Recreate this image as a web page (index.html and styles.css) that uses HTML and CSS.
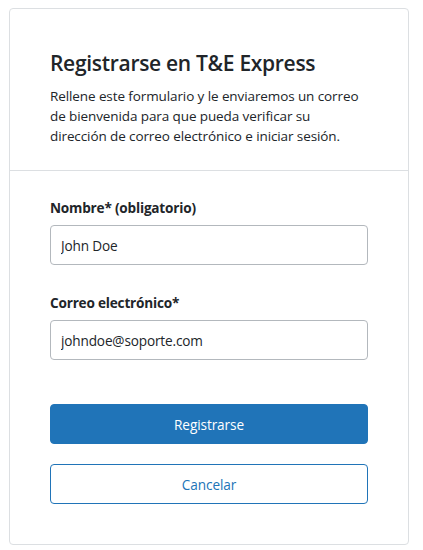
FILE: index.html
```html
<!DOCTYPE html>
<html lang="es">
<head>
<meta charset="utf-8">
<link rel="stylesheet" href="styles.css">
</head>
<body>
<div class="card">
  <div class="card-header">
    <h1 class="title">Registrarse en T&amp;E Express</h1>
    <p class="intro">Rellene este formulario y le enviaremos un correo de bienvenida para que pueda verificar su dirección de correo electrónico e iniciar sesión.</p>
  </div>
  <form class="card-body">
    <div class="field">
      <label class="label" for="name">Nombre* (obligatorio)</label>
      <input class="input" id="name" type="text" value="John Doe">
    </div>
    <div class="field">
      <label class="label" for="email">Correo electrónico*</label>
      <input class="input" id="email" type="email" value="johndoe@soporte.com">
    </div>
    <div class="actions">
      <button type="button" class="btn btn-primary">Registrarse</button>
      <button type="button" class="btn btn-outline">Cancelar</button>
    </div>
  </form>
</div>
</body>
</html>
```
FILE: styles.css
```css
* { box-sizing: border-box; }
body {
  margin: 0;
  padding: 8px 14px 5px 9px;
  font-family: "Open Sans", "Noto Sans", sans-serif;
  color: #212529;
  background: #fff;
}
.card {
  border: 1px solid #dcdfe2;
  border-radius: 4px;
  width: 400px;
  height: 537px;
}
.card-header {
  padding: 41px 40px 0 40px;
  height: 162px;
  border-bottom: 1px solid #dcdfe2;
}
.title {
  margin: 0 0 10px 0;
  font-size: 21px;
  font-weight: 600;
  line-height: 26px;
  letter-spacing: -0.3px;
  color: #212529;
}
.intro {
  margin: 0;
  max-width: 314px;
  font-size: 13.5px;
  line-height: 20px;
  letter-spacing: -0.1px;
  color: #212529;
}
.card-body {
  padding: 27px 40px 0 40px;
  display: flex;
  flex-direction: column;
}
.field {
  display: flex;
  flex-direction: column;
  margin-bottom: 28px;
}
.label {
  font-size: 13.6px;
  font-weight: 700;
  line-height: 20px;
  margin-bottom: 7px;
  letter-spacing: -0.2px;
}
.input {
  height: 40px;
  width: 318px;
  border: 1px solid #b3b8bd;
  border-radius: 4px;
  padding: 0 10px;
  font-family: inherit;
  font-size: 13.6px;
  color: #212529;
  letter-spacing: -0.15px;
}
.actions {
  display: flex;
  flex-direction: column;
  gap: 20px;
  margin-top: 16px;
}
.btn {
  height: 40px;
  width: 318px;
  border-radius: 4px;
  font-family: inherit;
  font-size: 13.6px;
  letter-spacing: -0.1px;
  cursor: pointer;
}
.btn-primary {
  background: #2074b8;
  border: 1px solid #2074b8;
  color: #fff;
}
.btn-outline {
  background: #fff;
  border: 1px solid #2074b8;
  color: #2074b8;
}
```
